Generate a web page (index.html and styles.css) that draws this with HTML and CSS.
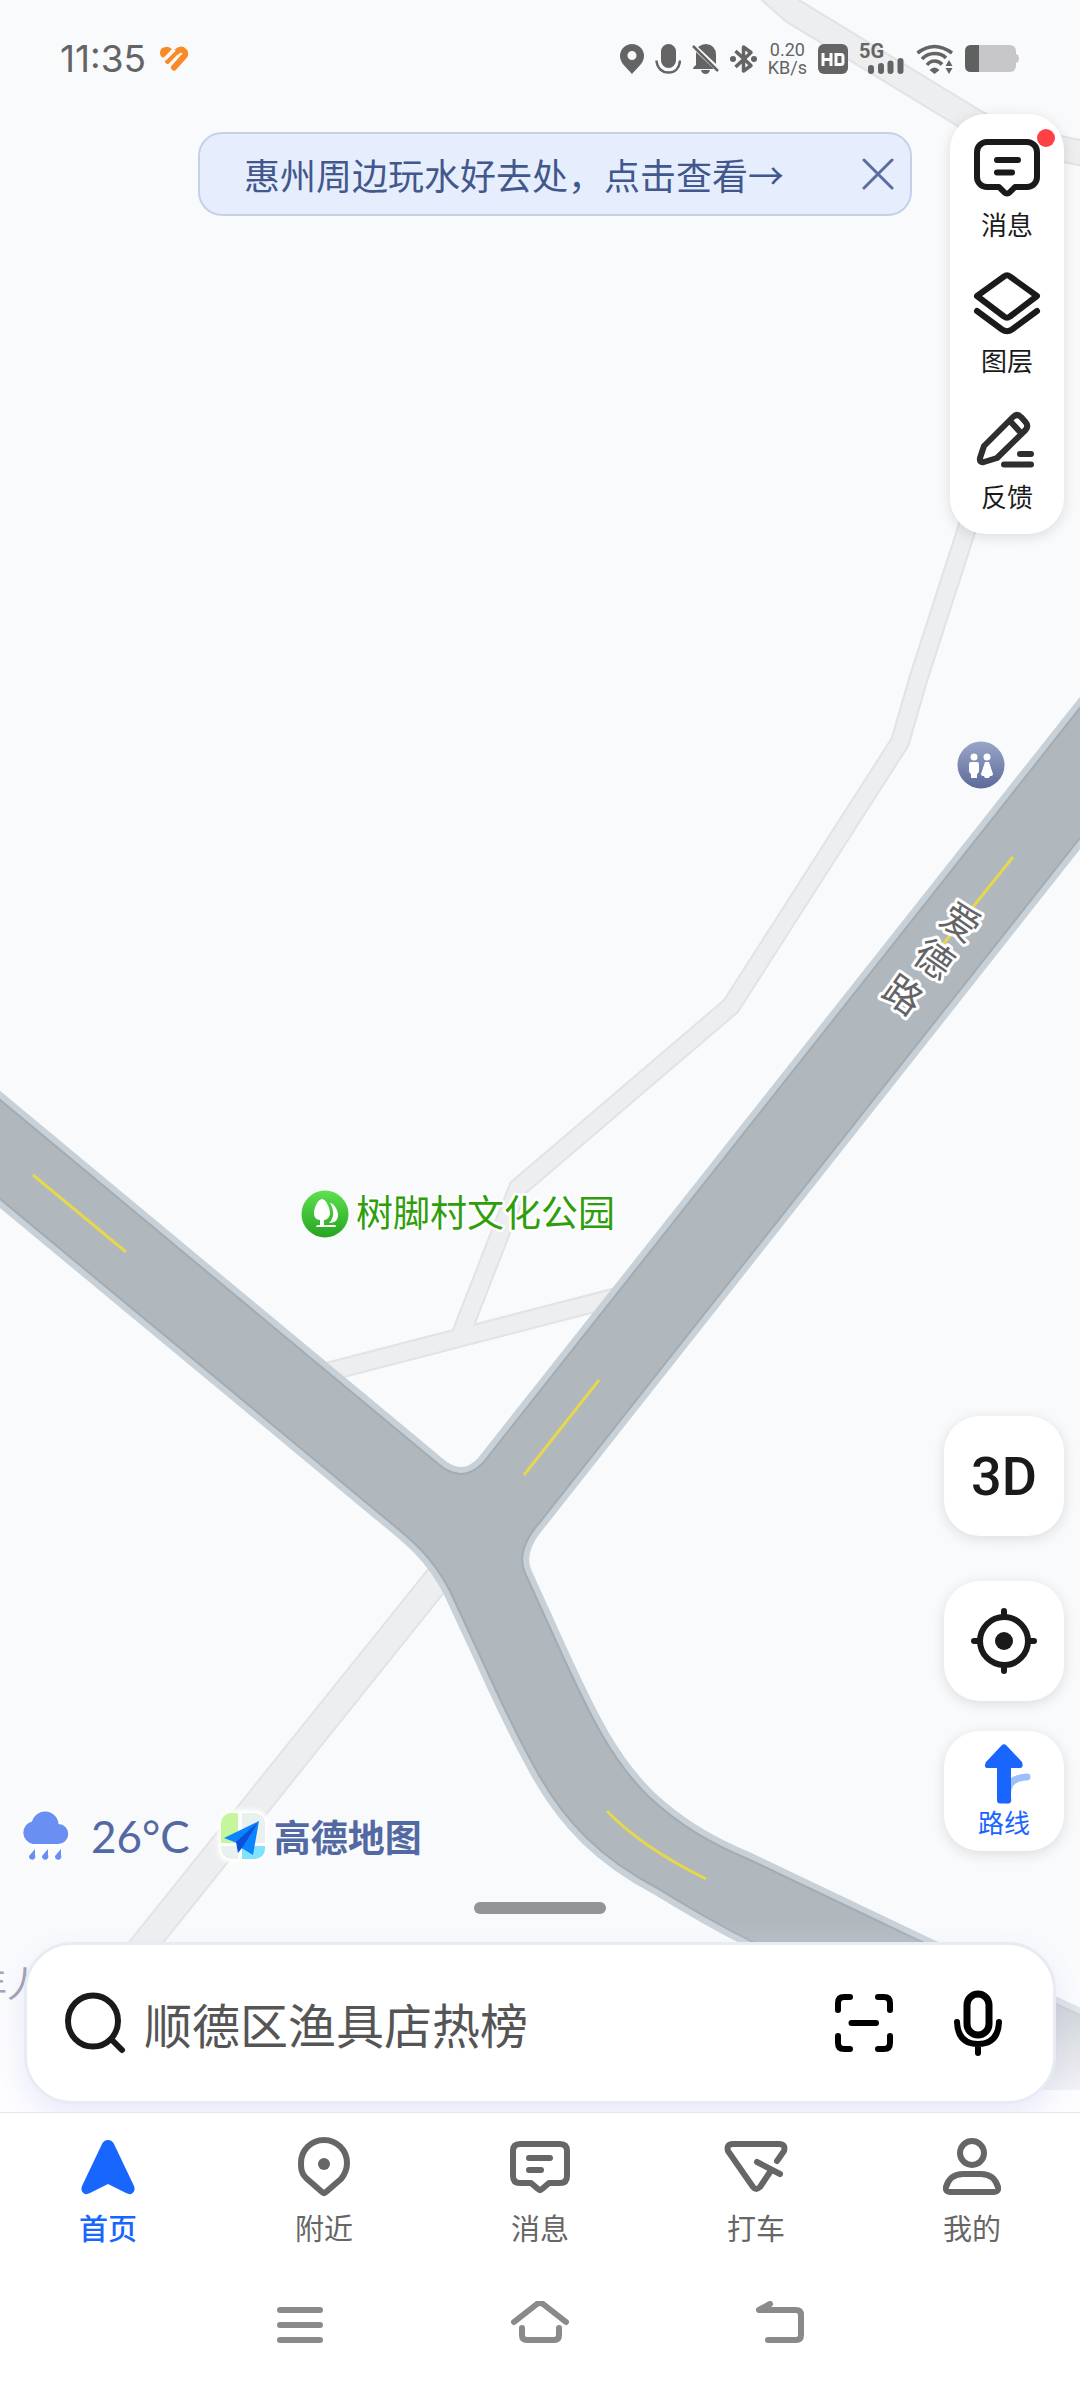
FILE: index.html
```html
<!DOCTYPE html>
<html lang="zh-CN">
<head>
<meta charset="utf-8">
<meta name="viewport" content="width=device-width, initial-scale=1">
<title>高德地图</title>
<link rel="stylesheet" href="styles.css">
</head>
<body>
<main class="map">
  <svg class="map-canvas" viewBox="0 0 1080 2112" preserveAspectRatio="xMidYMid slice" role="img" aria-label="地图">
    <defs>
      <linearGradient id="toilet" x1="0" y1="0" x2="0" y2="1"><stop offset="0" stop-color="#9aa6c8"/><stop offset="1" stop-color="#5d6a9b"/></linearGradient>
      <linearGradient id="park" x1="0" y1="0" x2="0" y2="1"><stop offset="0" stop-color="#5fe050"/><stop offset="1" stop-color="#25a322"/></linearGradient>
      <linearGradient id="fade" x1="0" y1="0" x2="0" y2="1"><stop offset="0" stop-color="#fdfdff" stop-opacity="0"/><stop offset="1" stop-color="#fdfdff" stop-opacity=".85"/></linearGradient>
      <path id="lane-a" d="M740-36L793 11L975 122L1005 137L1100 157"/>
      <path id="lane-b" d="M1010 395L918 680L900 742L731 1006L518 1188L461 1334"/>
      <path id="lane-c" d="M300 1379L640 1291"/>
      <path id="lane-d" d="M460 1551L83 2021"/>
      <path id="road" d="M-30 1075L437 1463Q462 1485 483 1463L1110 670V800L540 1522Q515 1551 525 1573L560 1650C592 1720 612 1760 648 1796C680 1826 710 1843 750 1860L922 1942L1110 2029V2120L753 1942C720 1926 688 1907 657 1888C600 1858 566 1822 540 1777C524 1749 500 1700 482 1660L450 1591C432 1556 412 1540 380 1514L-30 1174Z"/>
    </defs>
    <g fill="none">
      <g stroke="#e1e3e4"><use href="#lane-a" stroke-width="27"/><use href="#lane-b" stroke-width="20"/><use href="#lane-c" stroke-width="20"/><use href="#lane-d" stroke-width="29"/></g>
      <g stroke="#edeeef"><use href="#lane-a" stroke-width="23"/><use href="#lane-b" stroke-width="16"/><use href="#lane-c" stroke-width="16"/><use href="#lane-d" stroke-width="25"/></g>
    </g>
    <use href="#road" class="road-kerb"/>
    <use href="#road" class="road-surface"/>
    <path class="road-mark" d="M33 1175L126 1252M599 1380L524 1475M1013 857L940 948M607 1811Q640 1846 706 1879"/>
    <rect x="0" y="1920" width="1080" height="170" fill="url(#fade)"/>
    <rect x="0" y="2090" width="1080" height="22" fill="#fdfdff"/>

    <g class="road-name">
      <text transform="translate(961 922) rotate(35)" x="0" y="14">爱</text>
      <text transform="translate(934 959) rotate(35)" x="0" y="14">德</text>
      <text transform="translate(903 995) rotate(35)" x="0" y="14">路</text>
    </g>
    <text class="faint-name" x="-29" y="1998">年人</text>

    <circle cx="981" cy="765" r="23.500" fill="url(#toilet)"/>
    <g fill="#fff">
      <circle cx="974" cy="757" r="3.500"/><path d="M971 762h6q2 0 2 2v7q0 2-2 3v4h-6v-4q-2-1-2-3v-7q0-2 2-2z"/>
      <circle cx="987" cy="757" r="3.500"/><path d="M985 762h4l4 12q0 2-3 2l-1 2h-4l-1-2q-3 0-3-2z"/>
    </g>
    <circle cx="325" cy="1214" r="23.500" fill="url(#park)"/>
    <g fill="#fff">
      <path d="M322 1199C326 1199 330 1208 330 1213C330 1217 327 1220 324 1220V1225H335Q336 1225 336 1227H316Q316 1225 318 1225H320V1220C316 1220 314 1217 314 1213C314 1208 318 1199 322 1199z"/>
      <path d="M330 1203C334 1203 338 1210 338 1215C338 1220 335 1223 329 1223C335 1217 334 1210 330 1203z"/>
    </g>
    <text class="park-name" x="356" y="1227">树脚村文化公园</text>
  </svg>

  <header class="status">
    <time class="clock">11:35</time>
    <svg class="heart" width="28" height="26" viewBox="0 0 28 26"><g fill="none" stroke="#f98a26" stroke-width="6" stroke-linecap="round"><path d="M3.500 7.500L7 4"/><path d="M8 15L17 5.500Q21 2 24 5T23.500 11L14 21.500"/></g><path d="M0 7Q0 1 6 1Q10 1 12 3L3 12Q0 10 0 7z" fill="#f98a26"/><path d="M8 20L18 9.500" stroke="#f9fafc" stroke-width="2"/><path d="M5 14L15 4" stroke="#f9fafc" stroke-width="2"/></svg>
    <div class="status-icons">
      <svg width="24" height="30" viewBox="0 0 24 30"><path fill="#646464" fill-rule="evenodd" d="M12 0a12 12 0 0 1 12 12c0 7-6 11-12 18C6 23 0 19 0 12A12 12 0 0 1 12 0zm0 7a4.500 4.500 0 1 0 0 9 4.500 4.500 0 0 0 0-9z"/></svg>
      <svg width="26" height="30" viewBox="0 0 26 30"><rect x="6" y="0" width="15" height="24" rx="7.500" fill="#646464"/><path d="M1.500 16.500C2 24 7 28.500 13.500 28.500S24.500 24 25 16.500" fill="none" stroke="#646464" stroke-width="2.500"/></svg>
      <svg width="27" height="30" viewBox="0 0 27 30"><path fill="#646464" d="M6 3q4-3 8-3 10 1 10 11v9zM4 8l18 17H1q0-2 3-4zM9 26h9q-1 4-4.500 4T9 26z"/><path d="M1 2L26 27" stroke="#646464" stroke-width="2.500"/></svg>
      <svg width="27" height="30" viewBox="0 0 27 30"><path d="M5.500 7L21 21.500L13.500 27V3L21 8.500L5.500 23" fill="none" stroke="#646464" stroke-width="3.500" stroke-linejoin="round"/><circle cx="3" cy="15" r="3" fill="#646464"/><circle cx="24" cy="15" r="3" fill="#646464"/></svg>
      <span class="speed"><span>0.20</span><span>KB/s</span></span>
      <svg width="30" height="30" viewBox="0 0 30 30"><rect width="30" height="30" rx="6" fill="#646464"/><path d="M5 9v13M13 9v13M5 15.500h8M18 10.500h5q2 0 2 2v6q0 2-2 2h-5z" fill="none" stroke="#fafbfc" stroke-width="3"/></svg>
      <span class="signal"><b>5G</b>
        <svg width="36" height="17" viewBox="0 0 36 17"><path d="M3 11v3M13 9v5M22.500 6.500v7.500M32.500 4v10" stroke="#646464" stroke-width="6" stroke-linecap="round"/></svg>
      </span>
      <svg width="38" height="30" viewBox="0 0 38 30"><g fill="none" stroke="#646464" stroke-width="3.500"><path d="M1.500 9Q10 2.500 18.500 2.500T36 9"/><path d="M6 15Q11 9.500 18.500 9.500T30 14"/><path d="M11 21Q14 17 18.500 17T26 20.500"/></g><path d="M13.500 26Q18.500 21 23.500 26L18.500 30z" fill="#646464"/><path d="M29.500 22L33 16l3.500 6zM29.500 24h7L33 30z" fill="#646464"/></svg>
      <svg width="54" height="28" viewBox="0 0 54 28"><rect width="51" height="27" rx="6" fill="#c7c7c9"/><path d="M50 9q4 0 4 4.500T50 18z" fill="#c7c7c9"/><path d="M14 0H6Q0 0 0 6v15q0 6 6 6h8z" fill="#5f6060"/></svg>
    </div>
  </header>

  <div class="top-row">
    <div class="notice">
      <a class="notice-link" href="#nearby">惠州周边玩水好去处，点击查看→</a>
      <button class="notice-close" type="button" aria-label="关闭"><svg width="32" height="32" viewBox="0 0 32 32"><path d="M2 2L30 30M30 2L2 30" fill="none" stroke="#5a6d9e" stroke-width="3" stroke-linecap="round"/></svg></button>
    </div>
    <nav class="rail" aria-label="工具">
      <button class="rail-item" type="button">
        <svg width="72" height="72" viewBox="0 0 72 72"><path class="ink" d="M16 10H56a10 10 0 0 1 10 10V45a10 10 0 0 1-10 10H44l-5.500 5.500a3.500 3.500 0 0 1-5 0L28 55H16A10 10 0 0 1 6 45V20A10 10 0 0 1 16 10zM26 28H47M26 40.500H41"/></svg>
        <span>消息</span><i class="dot"></i>
      </button>
      <button class="rail-item" type="button">
        <svg width="72" height="72" viewBox="0 0 72 72"><path class="ink" d="M33 8.500Q36 6 39 8.500L66 28L39 48.500Q36 51 33 48.500L6 28zM6 43L31 61.500Q36 65 41 61.500L66 43"/></svg>
        <span>图层</span>
      </button>
      <button class="rail-item" type="button">
        <svg width="72" height="72" viewBox="0 0 72 72"><path class="ink soft" d="M42 13Q46 9 50 13L54.500 18Q58 22 54.500 26L26 54L13 58Q8 59 9 54L13 42zM39 17L50 29M49 50H60M33 60.500H60"/></svg>
        <span>反馈</span>
      </button>
    </nav>
  </div>

  <div class="lower-row">
    <div class="brand">
      <svg class="halo" width="48" height="50" viewBox="0 0 48 50"><path fill="#6a8ff2" d="M12 33A11.500 11.500 0 0 1 11 10.500A13.500 13.500 0 0 1 37.500 13A10 10 0 0 1 37 33zM14 38v6a3.200 3.200 0 1 1-6 1zM27 38v6a3.200 3.200 0 1 1-6 1zM40 38v6a3.200 3.200 0 1 1-6 1z"/></svg>
      <span class="temp">26°C</span>
      <svg class="halo" width="46" height="48" viewBox="0 0 46 48"><defs><clipPath id="tile"><rect x="1" y="1" width="44" height="46" rx="10"/></clipPath></defs><rect width="46" height="48" rx="11" fill="#fff"/><g clip-path="url(#tile)"><path fill="#c4f79b" d="M0 0H18V31H0z"/><path fill="#e9f1ee" d="M22 0H46V31H22zM0 34H18V48H0z"/><path fill="#7fe4fb" d="M22 34H46V48H22z"/></g><path fill="#0a84ff" d="M39 9L4 26l13 5zM39 9L33 43L20 35z"/><path fill="#0c50d8" d="M39 9L16 30l2 11 4-5z"/></svg>
      <span class="brand-name">高德地图</span>
    </div>
    <div class="controls">
      <button class="tile tile-3d" type="button">3D</button>
      <button class="tile" type="button" aria-label="定位"><svg width="68" height="68" viewBox="0 0 68 68"><circle class="ink" cx="34" cy="34" r="24"/><path class="ink" d="M34 4V8M34 60V64M4 34H8M60 34H64"/><circle cx="34" cy="34" r="9" fill="#1a1a1a"/></svg></button>
      <button class="tile tile-route" type="button"><svg width="60" height="60" viewBox="0 0 60 60"><path d="M34 56Q30 34 53 33" fill="none" stroke="#9dbffc" stroke-width="7" stroke-linecap="round"/><path fill="#1966ff" d="M27.500 1.500Q30 -1 32.500 1.500L48 18Q50 24 46 24H37V56Q37 59.500 34 59.500H26Q23 59.500 23 56V24H14Q9 24 12 18z"/></svg><span>路线</span></button>
    </div>
  </div>

  <div class="handle"></div>

  <form class="search" role="search">
    <svg width="62" height="62" viewBox="0 0 62 62"><ellipse class="ink" cx="28" cy="29" rx="25" ry="25.500"/><path class="ink" d="M47 48L57 58"/></svg>
    <input class="search-input" type="text" aria-label="搜索" placeholder="顺德区渔具店热榜">
    <button class="icon-btn" type="button" aria-label="扫一扫"><svg width="58" height="60" viewBox="0 0 58 60"><path class="ink black" d="M3 17V10Q3 4 9 4H15M43 4H49Q55 4 55 10V17M55 43V50Q55 56 49 56H43M15 56H9Q3 56 3 50V43M16.500 30H41"/></svg></button>
    <button class="icon-btn" type="button" aria-label="语音"><svg width="50" height="68" viewBox="0 0 50 68"><rect x="14" y="5" width="22" height="41" rx="11" fill="none" stroke="#000" stroke-width="7"/><path class="ink black" d="M4 33Q5 55 25 55T46 33M25 56V64"/></svg></button>
  </form>
</main>

<nav class="tabs" aria-label="主导航">
  <a class="tab active" href="#home"><svg width="64" height="64" viewBox="0 0 64 64"><path fill="#1966ff" d="M26 9Q28 5 32 5T38 9L58 51Q60 56 56 58.500Q54 60 50 58L32 49L14 58Q10 60 8 58.500Q4 56 6 51z"/></svg><span>首页</span></a>
  <a class="tab" href="#near"><svg width="64" height="64" viewBox="0 0 64 64"><path class="ink grey" d="M14 43C9 38 9 33 9 28A23 23 0 0 1 55 28C55 33 54 38 49 44L34 57Q32 59 30 57z"/><circle cx="32" cy="29" r="6" fill="#666"/></svg><span>附近</span></a>
  <a class="tab" href="#messages"><svg width="64" height="64" viewBox="0 0 64 64"><path class="ink grey" d="M12 9H52Q59 9 59 16V41Q59 48 52 48H41L34 54Q32 56 30 54L23 48H12Q5 48 5 41V16Q5 9 12 9zM21 23H42M21 35H33"/></svg><span>消息</span></a>
  <a class="tab" href="#taxi"><svg width="64" height="64" viewBox="0 0 64 64"><path class="ink grey" d="M53 26L60 16Q62 9 55 9H9Q2 9 4 16L29 52Q32 56 36 52L46 37M33 27L56 39"/></svg><span>打车</span></a>
  <a class="tab" href="#me"><svg width="64" height="64" viewBox="0 0 64 64"><circle class="ink grey" cx="32" cy="18" r="12"/><path class="ink grey" d="M23 39H41Q54 39 58 52Q59 57 54 57H10Q5 57 6 52Q10 39 23 39z"/></svg><span>我的</span></a>
</nav>

<nav class="system" aria-label="系统导航">
  <button type="button" aria-label="最近任务"><svg width="60" height="48" viewBox="0 0 60 48"><path class="ink sys" d="M10 9H50M10 24H50M10 39H50"/></svg></button>
  <button type="button" aria-label="主屏幕"><svg width="60" height="48" viewBox="0 0 60 48"><path class="ink sys" d="M4 21L27 3Q30 1 33 3L56 21M12 27V34Q12 39 17 39H44Q49 39 49 34V27"/></svg></button>
  <button type="button" aria-label="返回"><svg width="60" height="48" viewBox="0 0 60 48"><path class="ink sys" d="M20 3L9 9H46Q51 9 51 14V34Q51 39 46 39H18"/></svg></button>
</nav>
</body>
</html>
```
FILE: styles.css
```css
* { box-sizing: border-box; }

body {
  margin: 0;
  min-height: 100vh;
  display: flex;
  flex-direction: column;
  background: #fff;
  color: #1a1a1a;
  font-family: "Noto Sans CJK SC", "Noto Sans", sans-serif;
}

button {
  margin: 0;
  padding: 0;
  border: 0;
  background: none;
  color: inherit;
  font: inherit;
}

svg { display: block; flex: none; }

.ink {
  fill: none;
  stroke: #1a1a1a;
  stroke-width: 6;
  stroke-linecap: round;
  stroke-linejoin: round;
}
.ink.soft { stroke: #2e2e2e; }
.ink.black { stroke: #000; }
.ink.grey { stroke: #666; }
.ink.sys { stroke: #8a8a8a; }

/* Map */
.map {
  position: relative;
  flex: 1;
  display: flex;
  flex-direction: column;
  overflow: hidden;
  background: #f9fafc;
}
.map-canvas {
  position: absolute;
  inset: 0;
  width: 100%;
  height: 100%;
}
.map > :not(.map-canvas) { position: relative; }

.road-kerb { fill: none; stroke: #c8d1d8; stroke-width: 14; stroke-linejoin: round; }
.road-surface { fill: #b0b7bd; stroke: #a4acb3; stroke-width: 2; }
.road-mark { fill: none; stroke: #e5d84e; stroke-width: 3; }
.road-name {
  fill: #626466;
  stroke: #fff;
  stroke-width: 6;
  stroke-linejoin: round;
  paint-order: stroke;
  font-size: 38px;
  text-anchor: middle;
}
.park-name {
  fill: #2f9e0c;
  stroke: #fff;
  stroke-width: 5;
  stroke-linejoin: round;
  paint-order: stroke;
  font-size: 37px;
}
.faint-name { fill: #a2a5b4; font-size: 36px; }

/* Status bar */
.status {
  display: flex;
  align-items: center;
  height: 114px;
  padding: 4px 61px 0 60px;
  color: #646464;
  font-family: Roboto, "Noto Sans", sans-serif;
}
.clock {
  font-family: Inter, "Noto Sans", sans-serif;
  font-size: 37px;
  line-height: 44px;
}
.heart { margin-left: 14px; }
.status-icons {
  margin-left: auto;
  display: flex;
  align-items: center;
  gap: 11px;
}
.speed {
  display: flex;
  flex-direction: column;
  align-items: center;
  font-size: 18px;
  line-height: 18px;
}
.signal { display: flex; flex-direction: column; width: 46px; }
.signal b { font-size: 20px; line-height: 14px; }
.signal svg { margin: -1px 0 0 9px; }

/* Notice and tool rail */
.top-row {
  display: flex;
  justify-content: flex-end;
  align-items: flex-start;
  gap: 38px;
  padding: 0 16px;
}
.notice {
  flex: 0 1 714px;
  display: flex;
  align-items: center;
  justify-content: space-between;
  min-height: 84px;
  margin-top: 18px;
  padding: 0 16px 0 44px;
  border: 2px solid #c6d1e8;
  border-radius: 24px;
  background: #e6eefe;
}
.notice-link {
  color: #42588c;
  font-size: 36px;
  line-height: 48px;
  text-decoration: none;
}
.rail {
  flex: none;
  display: flex;
  flex-direction: column;
  gap: 28px;
  width: 114px;
  padding: 18px 0 22px;
  border-radius: 36px;
  background: #fff;
  box-shadow: 0 3px 14px rgba(0, 0, 0, .12);
}
.rail-item {
  position: relative;
  display: flex;
  flex-direction: column;
  align-items: center;
  gap: 4px;
  font-size: 26px;
  line-height: 32px;
}
.dot {
  position: absolute;
  top: -3px;
  right: 9px;
  width: 18px;
  height: 18px;
  border-radius: 50%;
  background: #ff4045;
}

/* Weather, brand, map controls */
.lower-row {
  margin-top: auto;
  display: flex;
  justify-content: space-between;
  align-items: flex-end;
  padding: 0 16px 0 21px;
}
.brand {
  display: flex;
  align-items: center;
  margin-bottom: -12px;
  color: #5369a3;
}
.halo { filter: drop-shadow(0 0 3px #fff) drop-shadow(0 0 2px #fff); }
.temp {
  margin: 0 30px 0 22px;
  font-family: Lato, "Noto Sans", sans-serif;
  font-size: 44px;
  line-height: 54px;
}
.brand-name {
  margin-left: 8px;
  font-size: 37px;
  font-weight: 700;
  line-height: 54px;
}
.controls { display: flex; flex-direction: column; gap: 30px; }
.tile {
  display: flex;
  flex-direction: column;
  align-items: center;
  justify-content: center;
  width: 120px;
  height: 120px;
  border-radius: 36px;
  background: #fff;
  box-shadow: 0 3px 14px rgba(0, 0, 0, .12);
}
.tile-3d {
  margin-bottom: 15px;
  font-family: Roboto, sans-serif;
  font-size: 54px;
  font-weight: 500;
}
.tile-route {
  gap: 2px;
  color: #1966ff;
  font-size: 26px;
  line-height: 32px;
}
.handle {
  align-self: center;
  width: 132px;
  height: 12px;
  margin: 51px 0 28px;
  border-radius: 6px;
  background: #939496;
}

/* Search */
.search {
  display: flex;
  align-items: center;
  margin: 0 24px 8px;
  min-height: 162px;
  padding: 0 50px 0 38px;
  border: 3px solid #e9ebf3;
  border-radius: 48px;
  background: #fff;
  box-shadow: 0 12px 28px rgba(90, 100, 210, .12);
}
.search-input {
  flex: 1;
  min-width: 0;
  margin: 0 17px;
  padding: 0;
  border: 0;
  outline: 0;
  background: none;
  font: inherit;
  font-size: 48px;
  line-height: 64px;
}
.search-input::placeholder { color: #555; opacity: 1; }
.icon-btn + .icon-btn { margin-left: 60px; }

/* Tab bar */
.tabs {
  position: relative;
  display: flex;
  border-top: 1px solid #e6e7eb;
  background: #fff;
}
.tab {
  flex: 1;
  display: flex;
  flex-direction: column;
  align-items: center;
  gap: 8px;
  padding: 22px 0 18px;
  color: #666;
  font-size: 29px;
  line-height: 40px;
  text-decoration: none;
}
.tab.active { color: #1966ff; font-weight: 500; }

/* System navigation */
.system {
  display: flex;
  justify-content: center;
  gap: 180px;
  padding: 36px 0 39px;
  background: #fff;
}
```
